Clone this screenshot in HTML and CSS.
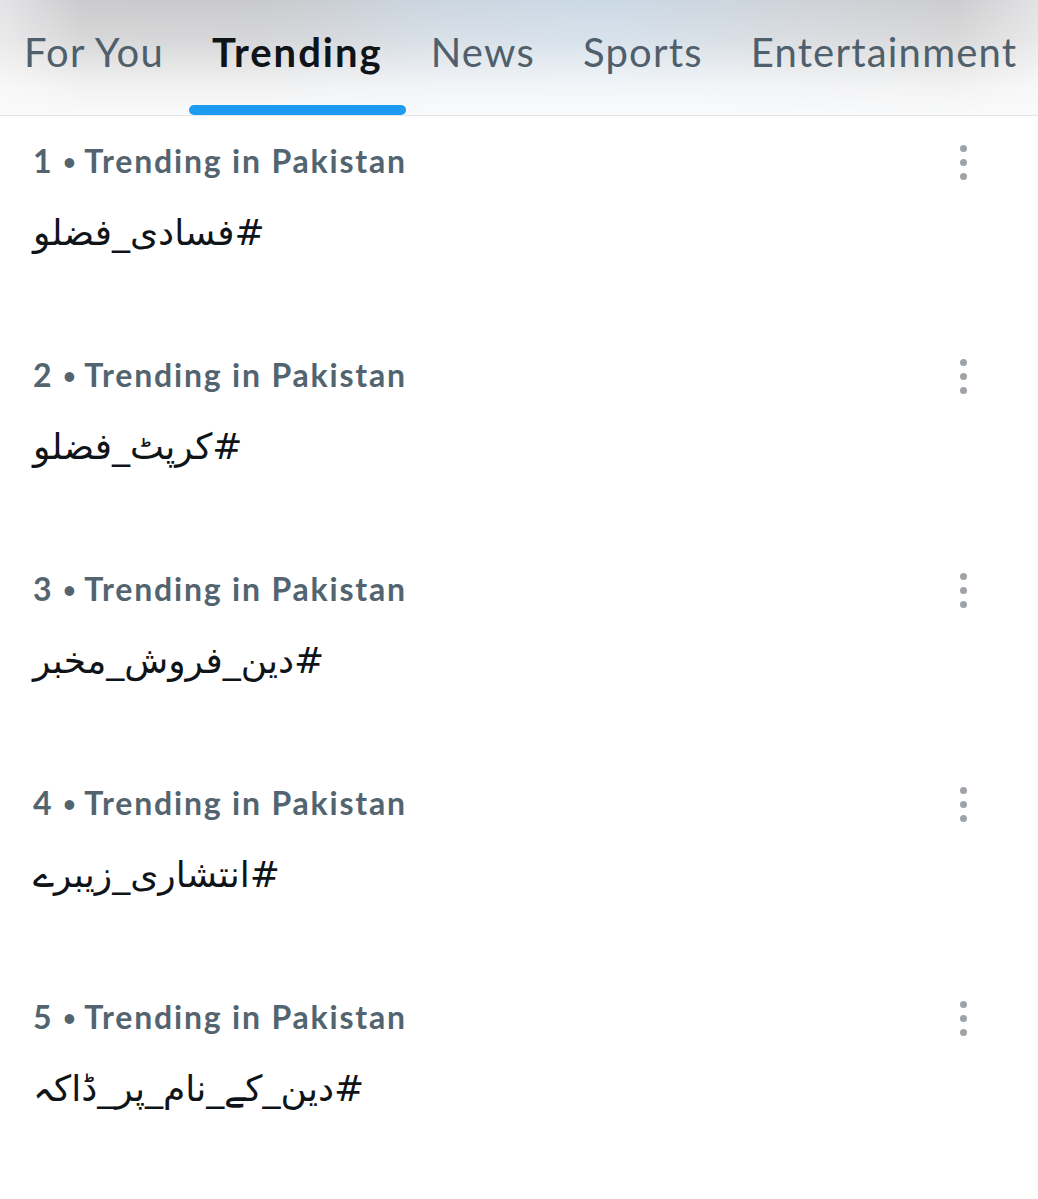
FILE: index.html
```html
<!DOCTYPE html>
<html lang="en">
<head>
<meta charset="utf-8">
<title>Trending</title>
<link rel="stylesheet" href="styles.css">
</head>
<body>
<nav class="tabs">
  <div class="tab"><span class="tab-label">For You</span><span class="indicator"></span></div>
  <div class="tab active"><span class="tab-label">Trending</span><span class="indicator"></span></div>
  <div class="tab"><span class="tab-label">News</span><span class="indicator"></span></div>
  <div class="tab"><span class="tab-label">Sports</span><span class="indicator"></span></div>
  <div class="tab"><span class="tab-label">Entertainment</span><span class="indicator"></span></div>
</nav>
<main class="list">
  <section class="trend">
    <div class="trend-body">
      <div class="meta">1 <span class="dot">•</span> Trending in Pakistan</div>
      <div class="tag" dir="rtl">#فسادی_فضلو</div>
    </div>
    <div class="more"><i></i><i></i><i></i></div>
  </section>
  <section class="trend">
    <div class="trend-body">
      <div class="meta">2 <span class="dot">•</span> Trending in Pakistan</div>
      <div class="tag" dir="rtl">#کرپٹ_فضلو</div>
    </div>
    <div class="more"><i></i><i></i><i></i></div>
  </section>
  <section class="trend">
    <div class="trend-body">
      <div class="meta">3 <span class="dot">•</span> Trending in Pakistan</div>
      <div class="tag" dir="rtl">#دین_فروش_مخبر</div>
    </div>
    <div class="more"><i></i><i></i><i></i></div>
  </section>
  <section class="trend">
    <div class="trend-body">
      <div class="meta">4 <span class="dot">•</span> Trending in Pakistan</div>
      <div class="tag" dir="rtl">#انتشاری_زیبرے</div>
    </div>
    <div class="more"><i></i><i></i><i></i></div>
  </section>
  <section class="trend">
    <div class="trend-body">
      <div class="meta">5 <span class="dot">•</span> Trending in Pakistan</div>
      <div class="tag" dir="rtl">#دین_کے_نام_پر_ڈاکہ</div>
    </div>
    <div class="more"><i></i><i></i><i></i></div>
  </section>
</main>
</body>
</html>
```

FILE: styles.css
```css
html, body {
  margin: 0;
  padding: 0;
  background: #ffffff;
}

body {
  font-family: Lato, "Noto Sans", "DejaVu Sans", sans-serif;
  width: 1038px;
  overflow: hidden;
}

.tabs {
  display: flex;
  height: 115px;
  border-bottom: 1px solid #e3e5e8;
  background:
    linear-gradient(180deg, rgba(255,255,255,0) 0%, rgba(255,255,255,0.25) 35%, rgba(255,255,255,0.75) 75%, rgba(250,251,252,0.98) 100%),
    linear-gradient(90deg, #e4e4e6 0%, #cbcbcd 8%, #c9cacc 25%, #ccd6e0 42%, #cbd9e6 58%, #cfd3d8 78%, #cdcdcf 92%, #e2e2e4 100%);
}

.tab {
  display: flex;
  flex-direction: column;
  align-items: stretch;
  padding: 0 24px;
}

.tab-label {
  flex: 1;
  padding-top: 28px;
  font-size: 40px;
  line-height: 49px;
  letter-spacing: 1.2px;
  color: #4f5f6c;
  font-weight: 400;
  white-space: nowrap;
}

.tab.active .tab-label {
  color: #0f1419;
  font-weight: 700;
  letter-spacing: 2px;
}

.indicator {
  height: 10px;
  margin: 0 -23px;
  border-radius: 5px;
  background: transparent;
}

.tab.active .indicator {
  background: #1d9bf0;
}

.list {
  display: flex;
  flex-direction: column;
}

.trend {
  display: flex;
  justify-content: space-between;
  height: 214px;
  padding: 0 0 0 33px;
  box-sizing: border-box;
}

.trend-body {
  display: flex;
  flex-direction: column;
}

.meta {
  padding-top: 25px;
  font-size: 32px;
  line-height: 40px;
  letter-spacing: 1.8px;
  font-weight: 700;
  color: #536471;
  white-space: nowrap;
}

.dot {
  font-size: 22px;
  vertical-align: 3px;
  letter-spacing: 0;
}

.tag {
  margin-top: 28px;
  font-family: "DejaVu Sans", sans-serif;
  font-size: 36px;
  line-height: 46px;
  color: #0f1419;
  text-align: left;
}

.more {
  display: flex;
  flex-direction: column;
  gap: 7px;
  width: 7px;
  margin: 29px 71px 0 0;
}

.more i {
  display: block;
  width: 7px;
  height: 7px;
  border-radius: 50%;
  background: #9ea3a8;
}
```
